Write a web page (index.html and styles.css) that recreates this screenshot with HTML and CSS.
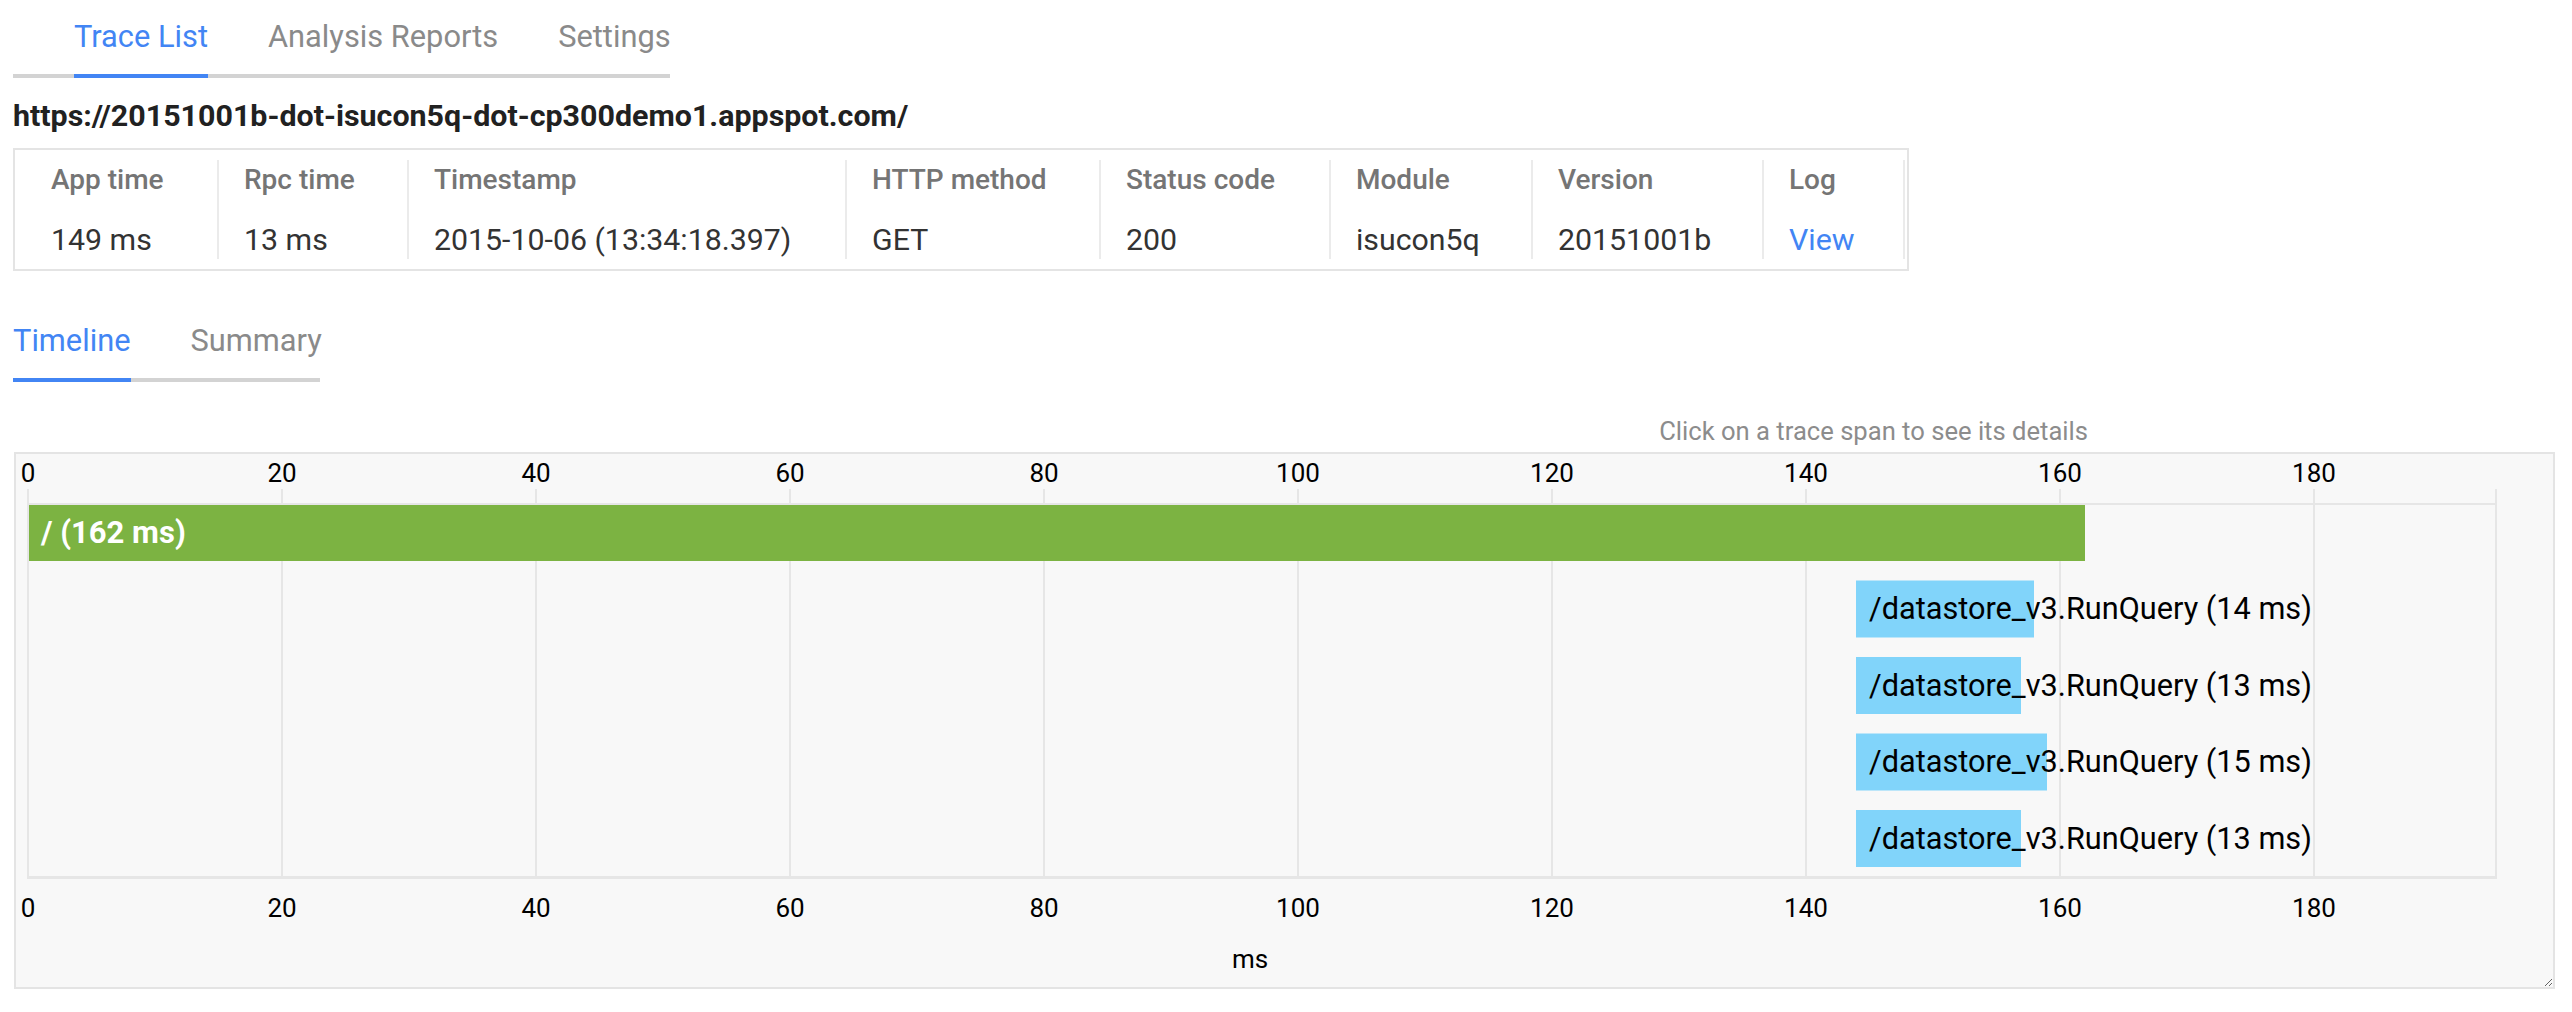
FILE: index.html
```html
<!DOCTYPE html>
<html>
<head>
<meta charset="utf-8">
<title>Trace</title>
<link rel="stylesheet" href="styles.css">
</head>
<body>
<nav class="tabs">
  <div class="tab active">Trace List</div>
  <div class="tab">Analysis Reports</div>
  <div class="tab">Settings</div>
</nav>
<div class="url">https://20151001b-dot-isucon5q-dot-cp300demo1.appspot.com/</div>
<div class="info">
  <div class="cell first"><div class="hd">App time</div><div class="val">149 ms</div></div>
  <div class="cell"><div class="hd">Rpc time</div><div class="val">13 ms</div></div>
  <div class="cell"><div class="hd">Timestamp</div><div class="val">2015-10-06 (13:34:18.397)</div></div>
  <div class="cell"><div class="hd">HTTP method</div><div class="val">GET</div></div>
  <div class="cell"><div class="hd">Status code</div><div class="val">200</div></div>
  <div class="cell"><div class="hd">Module</div><div class="val">isucon5q</div></div>
  <div class="cell"><div class="hd">Version</div><div class="val">20151001b</div></div>
  <div class="cell"><div class="hd">Log</div><div class="val link">View</div></div>
</div>
<nav class="subtabs">
  <div class="subtab active">Timeline</div>
  <div class="subtab">Summary</div>
</nav>
<div class="hint">Click on a trace span to see its details</div>
<div class="chart">
  <svg class="chart-svg" width="2537" height="533" viewBox="16 454 2537 533">
    <g class="grid">
      <rect x="27" y="489" width="2" height="390"/>
      <rect x="281" y="489" width="2" height="388"/>
      <rect x="535" y="489" width="2" height="388"/>
      <rect x="789" y="489" width="2" height="388"/>
      <rect x="1043" y="489" width="2" height="388"/>
      <rect x="1297" y="489" width="2" height="388"/>
      <rect x="1551" y="489" width="2" height="388"/>
      <rect x="1805" y="489" width="2" height="388"/>
      <rect x="2059" y="489" width="2" height="388"/>
      <rect x="2313" y="489" width="2" height="388"/>
      <rect x="2495" y="489" width="2" height="390"/>
      <rect x="27" y="503" width="2470" height="2"/>
      <rect x="27" y="876" width="2470" height="3"/>
    </g>
    <g class="axis">
      <text x="28" y="482">0</text>
      <text x="282" y="482">20</text>
      <text x="536" y="482">40</text>
      <text x="790" y="482">60</text>
      <text x="1044" y="482">80</text>
      <text x="1298" y="482">100</text>
      <text x="1552" y="482">120</text>
      <text x="1806" y="482">140</text>
      <text x="2060" y="482">160</text>
      <text x="2314" y="482">180</text>
      <text x="28" y="917">0</text>
      <text x="282" y="917">20</text>
      <text x="536" y="917">40</text>
      <text x="790" y="917">60</text>
      <text x="1044" y="917">80</text>
      <text x="1298" y="917">100</text>
      <text x="1552" y="917">120</text>
      <text x="1806" y="917">140</text>
      <text x="2060" y="917">160</text>
      <text x="2314" y="917">180</text>
      <text x="1250" y="968">ms</text>
    </g>
    <rect class="bar-root" x="29" y="505" width="2056" height="56"/>
    <rect class="bar-rpc" x="1856" y="580.5" width="178" height="57"/>
    <rect class="bar-rpc" x="1856" y="657" width="165" height="57"/>
    <rect class="bar-rpc" x="1856" y="733.5" width="191" height="57"/>
    <rect class="bar-rpc" x="1856" y="810" width="165" height="57"/>
    <text class="label-root" x="41" y="543">/ (162 ms)</text>
    <text class="label-rpc" x="1869" y="619">/datastore_v3.RunQuery (14 ms)</text>
    <text class="label-rpc" x="1869" y="695.5">/datastore_v3.RunQuery (13 ms)</text>
    <text class="label-rpc" x="1869" y="772">/datastore_v3.RunQuery (15 ms)</text>
    <text class="label-rpc" x="1869" y="848.5">/datastore_v3.RunQuery (13 ms)</text>
  </svg>
</div>
</body>
</html>
```
FILE: styles.css
```css
* { box-sizing: border-box; }
body {
  margin: 0;
  font-family: Roboto, "Liberation Sans", sans-serif;
  color: #212121;
  background: #fff;
}
.tabs {
  display: flex;
  gap: 60px;
  margin-left: 13px;
  width: 657px;
  padding-left: 61px;
  border-bottom: 4px solid #d3d3d3;
}
.tab {
  flex: none;
  white-space: nowrap;
  font-size: 30.8px;
  line-height: 35px;
  padding: 19px 0 20px;
  color: #8a8a8a;
}
.tab.active {
  color: #4285f4;
  border-bottom: 4px solid #4285f4;
  margin-bottom: -4px;
}
.url {
  margin: 21px 0 0 13px;
  font-size: 30.4px;
  line-height: 34px;
  font-weight: 700;
  color: #212121;
}
.info {
  margin: 15px 0 0 13px;
  width: 1896px;
  border: 2px solid #e4e4e4;
  padding: 10px 0;
  display: grid;
  grid-template-columns: 204px 190px 438px 254px 230px 202px 231px 141px;
}
.cell {
  height: 99px;
  padding: 4px 0 0 25px;
  border-right: 2px solid #ebebeb;
  white-space: nowrap;
}
.cell.first { padding-left: 36px; }
.hd {
  font-size: 28px;
  line-height: 32px;
  font-weight: 500;
  color: #757575;
}
.val {
  margin-top: 26px;
  font-size: 30.3px;
  line-height: 36px;
  color: #333;
}
.val.link { color: #4285f4; }
.subtabs {
  display: flex;
  gap: 60px;
  margin: 34px 0 0 13px;
  width: 307px;
  border-bottom: 4px solid #d3d3d3;
}
.subtab {
  flex: none;
  white-space: nowrap;
  font-size: 30.8px;
  line-height: 35px;
  padding: 18px 0 20px;
  color: #8a8a8a;
}
.subtab.active {
  color: #4285f4;
  border-bottom: 4px solid #4285f4;
  margin-bottom: -4px;
}
.hint {
  margin: 34px 0 0 13px;
  width: 2075px;
  text-align: right;
  font-size: 25.6px;
  line-height: 30px;
  color: #8c8c8c;
}
.chart {
  margin: 6px 0 0 14px;
  width: 2541px;
  height: 537px;
  border: 2px solid #e4e4e4;
  background: #f8f8f8;
  overflow: hidden;
  resize: both;
}
.chart-svg { display: block; }
.grid rect { fill: #e6e6e6; }
.axis text {
  font-family: Roboto, "Liberation Sans", sans-serif;
  font-size: 26px;
  fill: #000;
  text-anchor: middle;
}
.bar-root { fill: #7cb342; }
.bar-rpc { fill: #81d4fa; }
.label-root {
  font-family: Roboto, "Liberation Sans", sans-serif;
  font-size: 31px;
  font-weight: 700;
  fill: #fff;
}
.label-rpc {
  font-family: Roboto, "Liberation Sans", sans-serif;
  font-size: 30.7px;
  fill: #000;
}
```
